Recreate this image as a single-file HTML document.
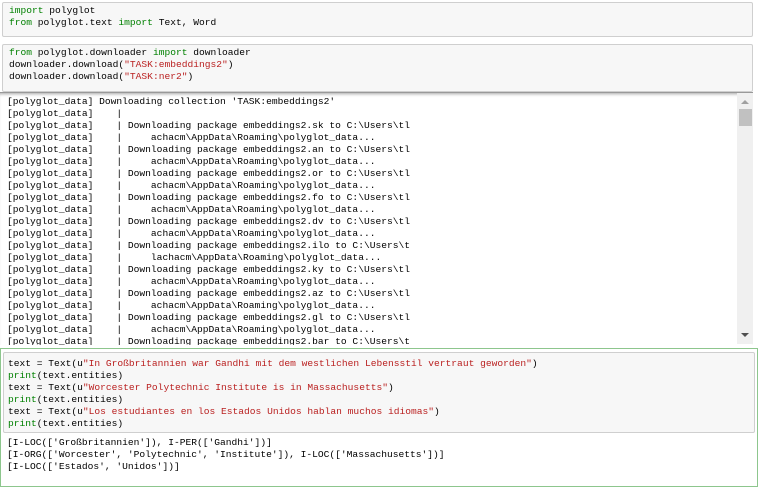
<!DOCTYPE html>
<html><head><meta charset="utf-8"><style>
body{margin:0;background:#fff;width:760px;height:488px;overflow:hidden;font-family:"Liberation Mono","DejaVu Sans Mono",monospace;font-size:9.6px;line-height:12px;color:#000;position:relative}
.in{position:absolute;background:#f7f7f7;border:1px solid #cfcfcf;border-radius:2px;box-sizing:border-box;padding:2px 0 0 6px;white-space:pre}
.k{color:#008000}.s{color:#ba2121}
#out{position:absolute;left:0;top:92px;width:753px;height:252px;overflow:hidden;border-top:1px solid #999;box-shadow:inset 0 3px 3px -2px rgba(0,0,0,.35);white-space:pre}
#out .t{position:absolute;left:7px;top:3px}
#sb{position:absolute;left:737px;top:93px;width:16px;height:251px;background:#f0f0f0}
#thumb{position:absolute;left:2px;top:16px;width:13px;height:17px;background:#c1c1c1}
#cell3{position:absolute;left:0;top:348px;width:758px;height:139px;border:1px solid #8dc68d;box-sizing:border-box}
.o{position:absolute;white-space:pre}
</style></head><body>
<div class="in" style="left:2px;top:2px;width:751px;height:35px"><span class="k">import</span> polyglot
<span class="k">from</span> polyglot.text <span class="k">import</span> Text, Word</div>
<div class="in" style="left:2px;top:44px;width:751px;height:48px"><span class="k">from</span> polyglot.downloader <span class="k">import</span> downloader
downloader.download(<span class="s">"TASK:embeddings2"</span>)
downloader.download(<span class="s">"TASK:ner2"</span>)</div>
<div id="out"><div class="t">[polyglot_data] Downloading collection 'TASK:embeddings2'
[polyglot_data]    |
[polyglot_data]    | Downloading package embeddings2.sk to C:\Users\tl
[polyglot_data]    |     achacm\AppData\Roaming\polyglot_data...
[polyglot_data]    | Downloading package embeddings2.an to C:\Users\tl
[polyglot_data]    |     achacm\AppData\Roaming\polyglot_data...
[polyglot_data]    | Downloading package embeddings2.or to C:\Users\tl
[polyglot_data]    |     achacm\AppData\Roaming\polyglot_data...
[polyglot_data]    | Downloading package embeddings2.fo to C:\Users\tl
[polyglot_data]    |     achacm\AppData\Roaming\polyglot_data...
[polyglot_data]    | Downloading package embeddings2.dv to C:\Users\tl
[polyglot_data]    |     achacm\AppData\Roaming\polyglot_data...
[polyglot_data]    | Downloading package embeddings2.ilo to C:\Users\t
[polyglot_data]    |     lachacm\AppData\Roaming\polyglot_data...
[polyglot_data]    | Downloading package embeddings2.ky to C:\Users\tl
[polyglot_data]    |     achacm\AppData\Roaming\polyglot_data...
[polyglot_data]    | Downloading package embeddings2.az to C:\Users\tl
[polyglot_data]    |     achacm\AppData\Roaming\polyglot_data...
[polyglot_data]    | Downloading package embeddings2.gl to C:\Users\tl
[polyglot_data]    |     achacm\AppData\Roaming\polyglot_data...
[polyglot_data]    | Downloading package embeddings2.bar to C:\Users\t</div></div>
<div id="sb"><svg width="16" height="251" style="position:absolute;left:0;top:0"><path d="M4 11 L8 7 L12 11Z" fill="#a0a0a0"/><path d="M4 240 L8 244 L12 240Z" fill="#505050"/></svg><div id="thumb"></div></div>
<div id="cell3">
<div class="in" style="left:2px;top:3px;width:752px;height:81px;padding:5px 0 0 4px">text = Text(u<span class="s">"In Großbritannien war Gandhi mit dem westlichen Lebensstil vertraut geworden"</span>)
<span class="k">print</span>(text.entities)
text = Text(u<span class="s">"Worcester Polytechnic Institute is in Massachusetts"</span>)
<span class="k">print</span>(text.entities)
text = Text(u<span class="s">"Los estudiantes en los Estados Unidos hablan muchos idiomas"</span>)
<span class="k">print</span>(text.entities)</div>
<div class="o" style="left:6px;top:88px">[I-LOC(['Großbritannien']), I-PER(['Gandhi'])]
[I-ORG(['Worcester', 'Polytechnic', 'Institute']), I-LOC(['Massachusetts'])]
[I-LOC(['Estados', 'Unidos'])]</div>
</div>
</body></html>
